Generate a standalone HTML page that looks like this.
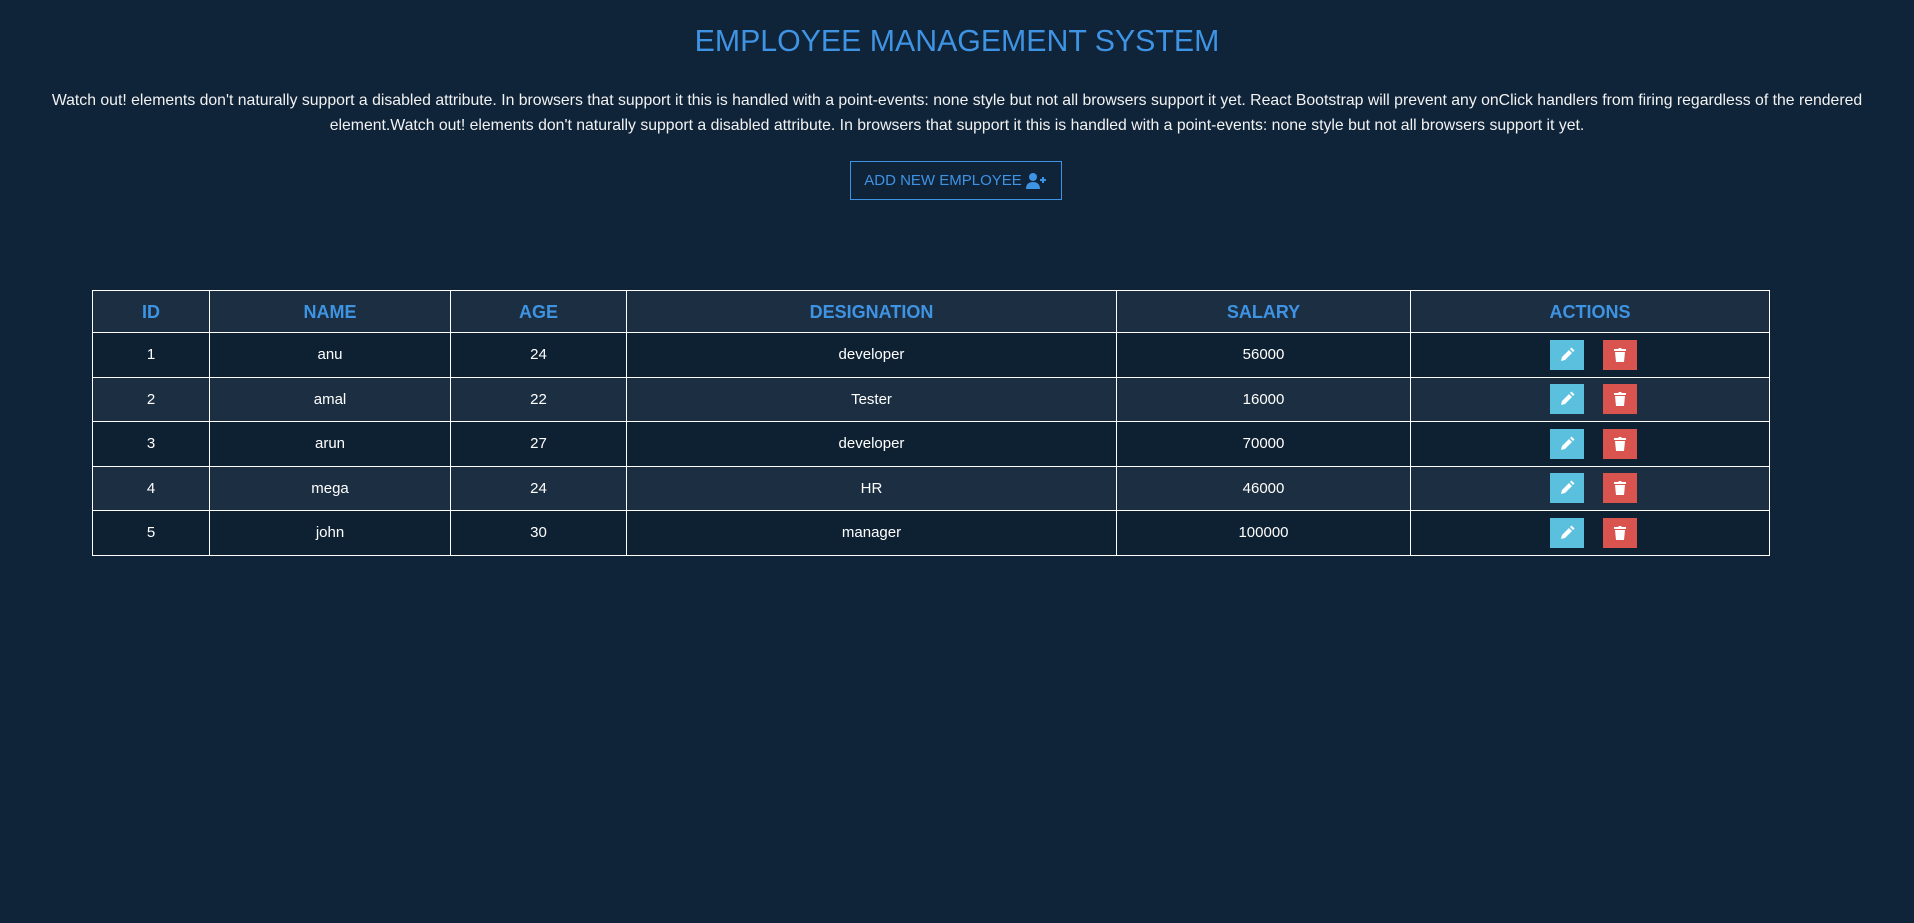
<!DOCTYPE html>
<html><head><style>
body{margin:0;background:#0f2339;font-family:"Liberation Sans",sans-serif;color:#fff;width:1914px;height:923px;overflow:hidden}
h1{margin:0;position:absolute;top:25px;width:1914px;text-align:center;font-weight:normal;font-size:30.3px;color:#3f93e3;letter-spacing:0}
p{position:absolute;top:89px;left:0;width:1914px;margin:0;text-align:center;font-size:15.8px;line-height:24.5px;color:#f2f2f2;white-space:nowrap}
.btn{position:absolute;left:850px;top:161px;border:1px solid #3f93e3;color:#3f93e3;font-size:15px;display:flex;align-items:center;justify-content:center;gap:4px;box-sizing:border-box;width:212px;height:39px}
table{position:absolute;left:92px;top:290px;width:1678px;border-collapse:collapse;font-size:15px}
td,th{border:1px solid #fff;text-align:center;padding:0}
th{height:39px;color:#3f93e3;font-size:18px;background:#1c2f42;padding-top:2px}
td{height:43.5px}
tr.a td{background:#0e2133}tr.b td{background:#1c2f42}
.e,.d{display:inline-block;width:34px;height:30px;vertical-align:middle;position:relative;top:0px;left:3px}
.e{background:#5bc0de;margin-right:19px}.d{background:#d9534f}
svg{display:block;margin:7px auto}
</style></head><body>
<h1>EMPLOYEE MANAGEMENT SYSTEM</h1>
<p>Watch out! elements don't naturally support a disabled attribute. In browsers that support it this is handled with a point-events: none style but not all browsers support it yet. React Bootstrap will prevent any onClick handlers from firing regardless of the rendered<br>element.Watch out! elements don't naturally support a disabled attribute. In browsers that support it this is handled with a point-events: none style but not all browsers support it yet.</p>
<div class="btn">ADD NEW EMPLOYEE <svg width="22" height="16" viewBox="0 0 22 16" style="margin:0"><circle cx="7" cy="4" r="4" fill="#3f93e3"/><path d="M0 16c0-5 3-7 7-7s7 2 7 7z" fill="#3f93e3"/><path d="M17 4v6M14 7h6" stroke="#3f93e3" stroke-width="2"/></svg></div>
<table>
<colgroup><col style="width:117px"><col style="width:241px"><col style="width:176px"><col style="width:490px"><col style="width:294px"><col></colgroup>
<tr><th>ID</th><th>NAME</th><th>AGE</th><th>DESIGNATION</th><th>SALARY</th><th>ACTIONS</th></tr>
<tr class="a"><td>1</td><td>anu</td><td>24</td><td>developer</td><td>56000</td><td><span class="e"><svg width="16" height="16" viewBox="0 0 16 16"><path d="M2 14l1-4 7-7 3 3-7 7zM11 2l1.5-1.5 3 3L14 5z" fill="#fff"/></svg></span><span class="d"><svg width="14" height="16" viewBox="0 0 14 16"><path d="M1 2h4l1-1h2l1 1h4v2H1zM2 5h10l-1 10H3z" fill="#fff"/></svg></span></td></tr>
<tr class="b"><td>2</td><td>amal</td><td>22</td><td>Tester</td><td>16000</td><td><span class="e"><svg width="16" height="16" viewBox="0 0 16 16"><path d="M2 14l1-4 7-7 3 3-7 7zM11 2l1.5-1.5 3 3L14 5z" fill="#fff"/></svg></span><span class="d"><svg width="14" height="16" viewBox="0 0 14 16"><path d="M1 2h4l1-1h2l1 1h4v2H1zM2 5h10l-1 10H3z" fill="#fff"/></svg></span></td></tr>
<tr class="a"><td>3</td><td>arun</td><td>27</td><td>developer</td><td>70000</td><td><span class="e"><svg width="16" height="16" viewBox="0 0 16 16"><path d="M2 14l1-4 7-7 3 3-7 7zM11 2l1.5-1.5 3 3L14 5z" fill="#fff"/></svg></span><span class="d"><svg width="14" height="16" viewBox="0 0 14 16"><path d="M1 2h4l1-1h2l1 1h4v2H1zM2 5h10l-1 10H3z" fill="#fff"/></svg></span></td></tr>
<tr class="b"><td>4</td><td>mega</td><td>24</td><td>HR</td><td>46000</td><td><span class="e"><svg width="16" height="16" viewBox="0 0 16 16"><path d="M2 14l1-4 7-7 3 3-7 7zM11 2l1.5-1.5 3 3L14 5z" fill="#fff"/></svg></span><span class="d"><svg width="14" height="16" viewBox="0 0 14 16"><path d="M1 2h4l1-1h2l1 1h4v2H1zM2 5h10l-1 10H3z" fill="#fff"/></svg></span></td></tr>
<tr class="a"><td>5</td><td>john</td><td>30</td><td>manager</td><td>100000</td><td><span class="e"><svg width="16" height="16" viewBox="0 0 16 16"><path d="M2 14l1-4 7-7 3 3-7 7zM11 2l1.5-1.5 3 3L14 5z" fill="#fff"/></svg></span><span class="d"><svg width="14" height="16" viewBox="0 0 14 16"><path d="M1 2h4l1-1h2l1 1h4v2H1zM2 5h10l-1 10H3z" fill="#fff"/></svg></span></td></tr>
</table>
</body></html>
